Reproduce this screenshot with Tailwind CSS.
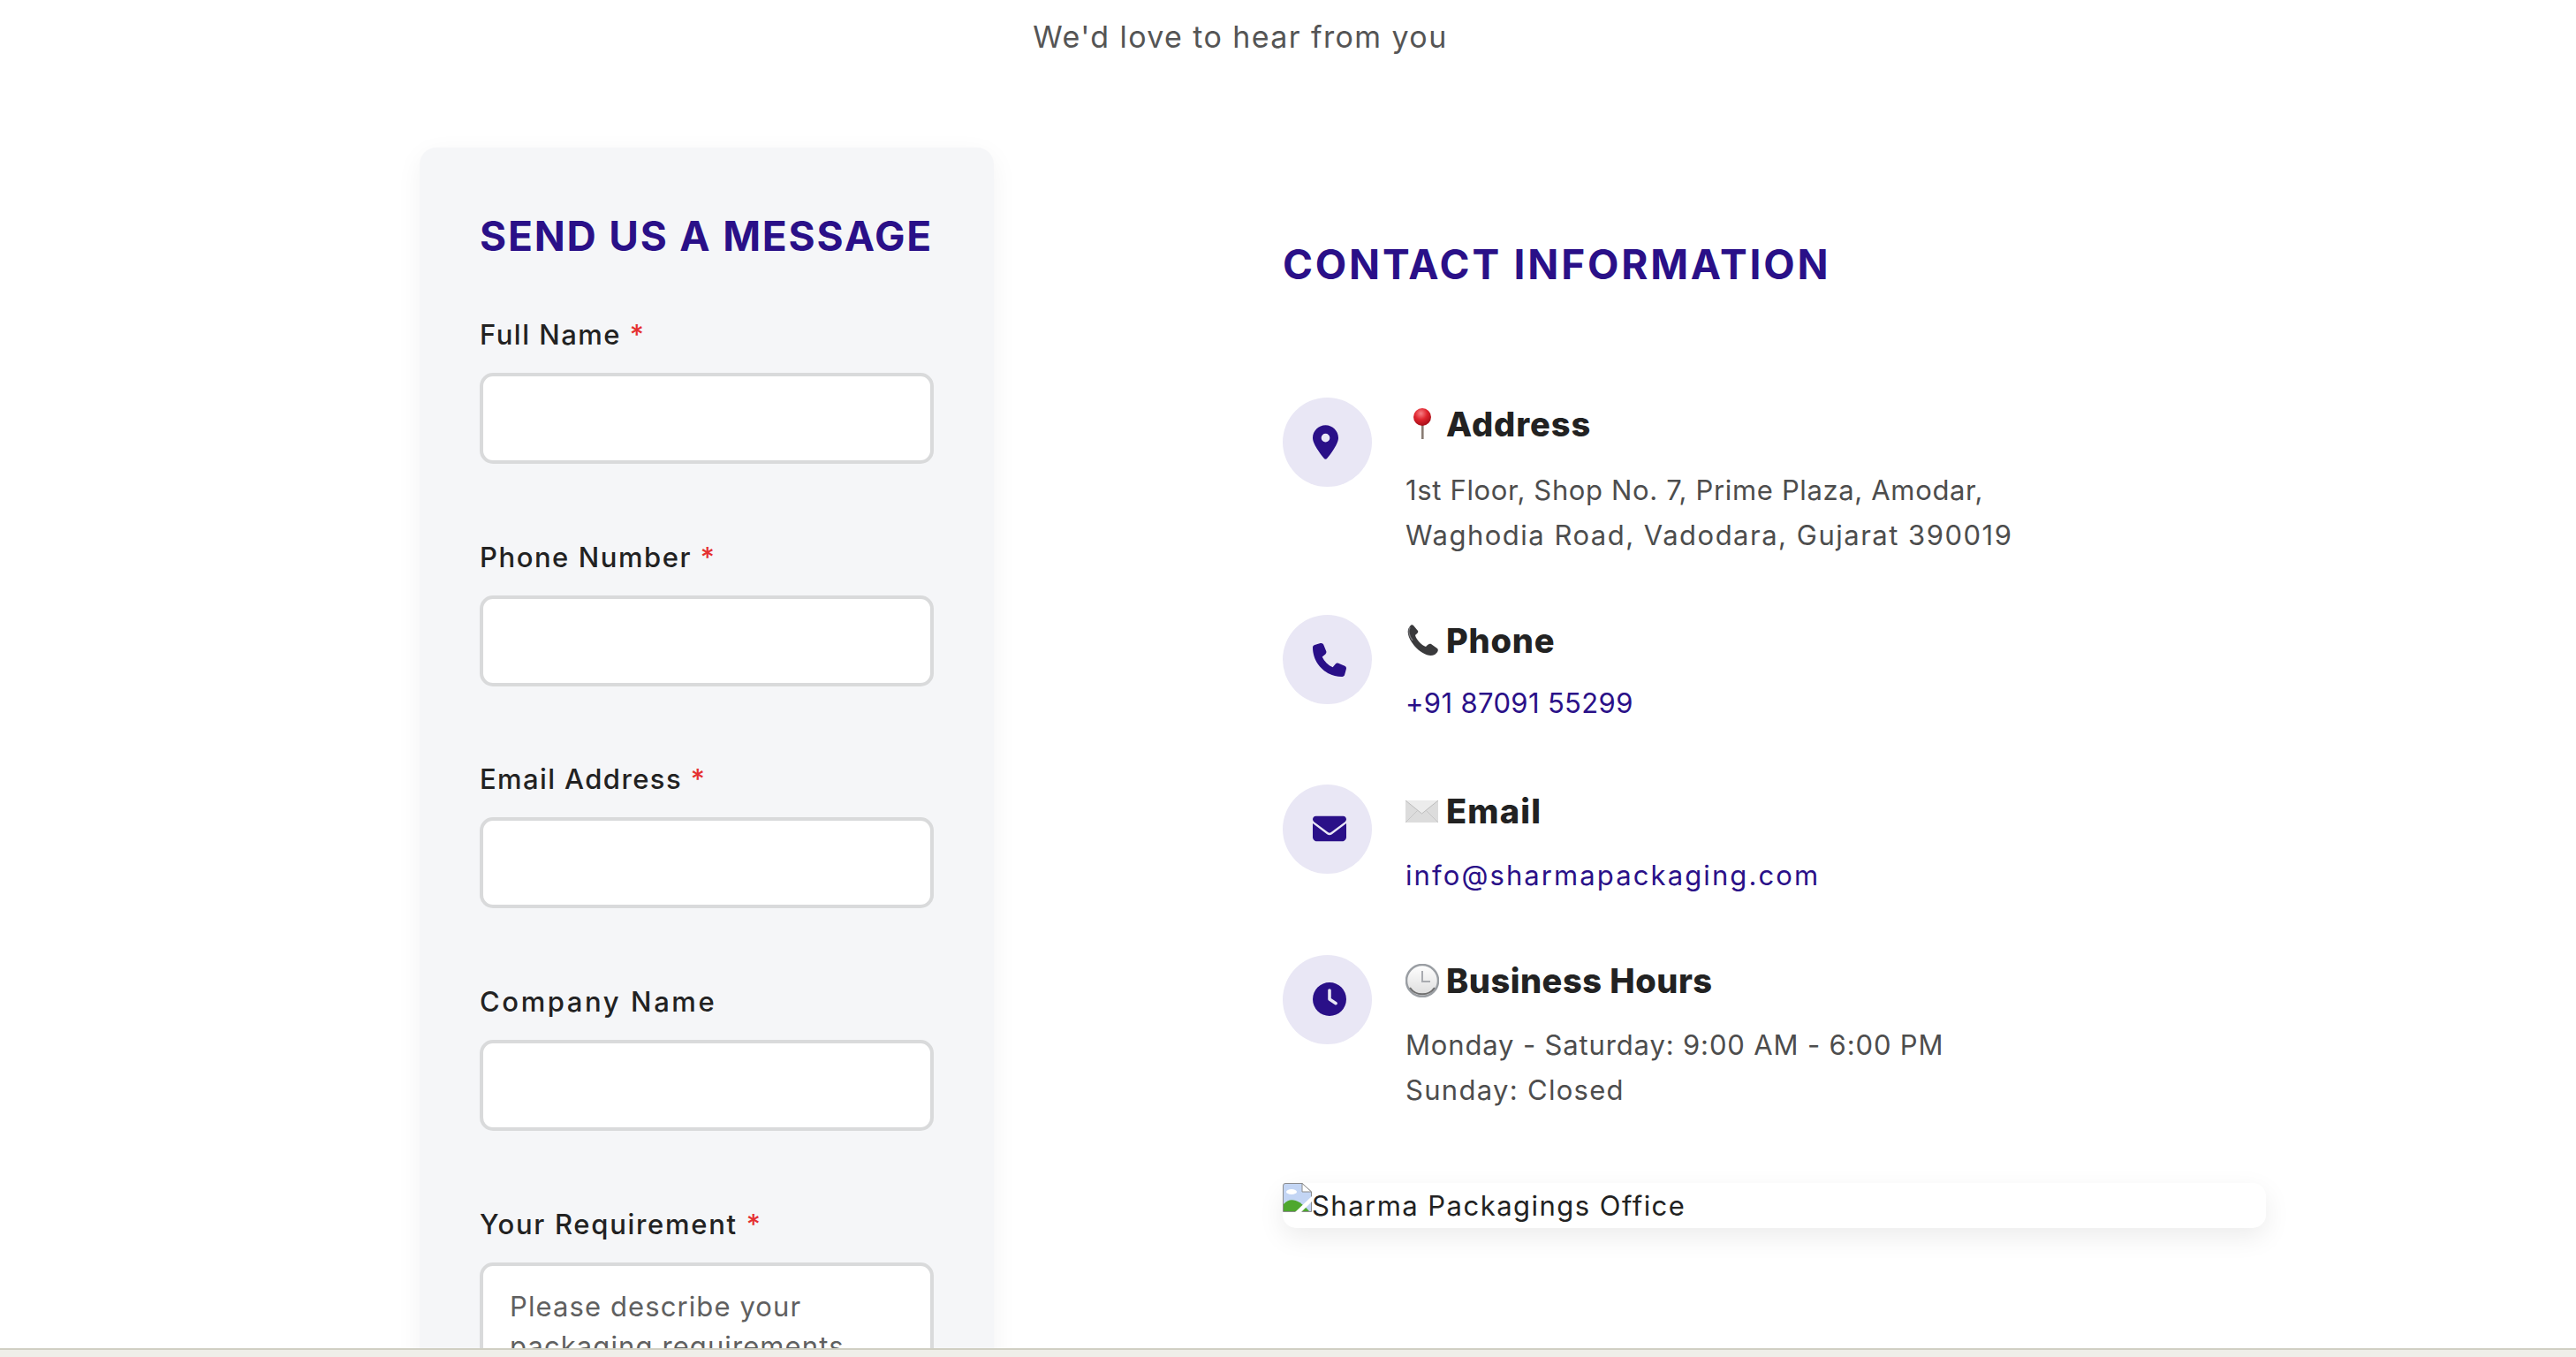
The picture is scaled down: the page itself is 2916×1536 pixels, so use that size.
<!DOCTYPE html>
<html lang="en">
<head>
    <meta charset="UTF-8">
    <meta name="viewport" content="width=device-width, initial-scale=1.0">
    <title>Contact Us</title>
    <script src="https://cdn.jsdelivr.net/npm/@tailwindcss/browser@4"></script>
</head>
<body class="bg-white h-[1536px] overflow-hidden flex flex-col font-['Inter',sans-serif] text-[31px] leading-[51px] text-[#4d4d4d]">
    <main class="h-[1526px] overflow-hidden">
        <p class="text-center h-[167px] pt-[16px] text-[34px] leading-[51px] tracking-[1.4px] text-[#555555] pr-[108px]">We'd love to hear from you</p>

        <div class="flex pl-[475px]">
            <!-- Form card -->
            <section class="w-[650px] shrink-0 h-[1500px] bg-[#f5f6f8] rounded-[19px] shadow-[0_8px_30px_rgba(0,0,0,0.05)] px-[68px] pt-[70px]">
                <h2 class="text-[46px] leading-[60px] font-bold text-[#2a1088] uppercase tracking-[1.8px] mb-[57px] whitespace-nowrap">Send us a message</h2>

                <label class="block leading-[49px] font-medium text-[#222222] mb-[19px] tracking-[1.5px]">Full Name <span class="text-[#e53030]">*</span></label>
                <input type="text" class="block w-full h-[103px] bg-white border-[4px] border-[#d9dadb] rounded-[15px] mb-[80.7px]">

                <label class="block leading-[49px] font-medium text-[#222222] mb-[19px] tracking-[1.55px]">Phone Number <span class="text-[#e53030]">*</span></label>
                <input type="text" class="block w-full h-[103px] bg-white border-[4px] border-[#d9dadb] rounded-[15px] mb-[80.7px]">

                <label class="block leading-[49px] font-medium text-[#222222] mb-[19px] tracking-[1.4px]">Email Address <span class="text-[#e53030]">*</span></label>
                <input type="text" class="block w-full h-[103px] bg-white border-[4px] border-[#d9dadb] rounded-[15px] mb-[80.7px]">

                <label class="block leading-[49px] font-medium text-[#222222] mb-[19px] tracking-[2.6px]">Company Name</label>
                <input type="text" class="block w-full h-[103px] bg-white border-[4px] border-[#d9dadb] rounded-[15px] mb-[80.7px]">

                <label class="block leading-[49px] font-medium text-[#222222] mb-[19px] tracking-[1.7px]">Your Requirement <span class="text-[#e53030]">*</span></label>
                <textarea rows="4" placeholder="Please describe your packaging requirements..." class="block w-full h-[240px] bg-white border-[4px] border-[#d9dadb] rounded-[15px] px-[30px] py-[23px] text-[31px] leading-[45px] tracking-[1.1px] placeholder:text-[#606060] resize-none"></textarea>
            </section>

            <!-- Contact info -->
            <section class="w-[1113px] ml-[327px] pt-[102px]">
                <h2 class="text-[46px] leading-[60px] font-bold text-[#2a1088] uppercase tracking-[2.8px] mb-[121px]">Contact Information</h2>

                <div class="flex gap-[38px] mb-[65px]">
                    <div class="w-[101px] h-[101px] shrink-0 rounded-full bg-[#e9e7f5] flex items-center pl-[34px]">
                        <svg class="h-[39px] w-[29px]" viewBox="0 0 384 512" fill="#2a1088"><path d="M215.7 499.2C267 435 384 279.4 384 192C384 86 298 0 192 0S0 86 0 192c0 87.4 117 243 168.3 307.2c12.3 15.3 35.1 15.3 47.4 0zM192 128a64 64 0 1 1 0 128 64 64 0 1 1 0-128z"/></svg>
                    </div>
                    <div>
                        <h3 class="flex items-center h-[60px] mb-[19px] text-[38px] font-extrabold text-[#222222] tracking-[0.9px]">
                            <span class="w-[46px] shrink-0 flex">
                                <svg class="w-[38px] h-[36px]" viewBox="0 0 38 36"><defs><radialGradient id="pinball" cx="0.42" cy="0.3" r="0.7"><stop offset="0" stop-color="#f77f85"/><stop offset="0.5" stop-color="#e0252e"/><stop offset="1" stop-color="#a50e18"/></radialGradient></defs><rect x="18" y="16" width="2.6" height="19" fill="#8a7d74"/><circle cx="19" cy="10" r="10" fill="url(#pinball)"/></svg>
                            </span>
                            Address
                        </h3>
                        <p><span class="tracking-[0.65px]">1st Floor, Shop No. 7, Prime Plaza, Amodar,</span><br><span class="tracking-[1.5px]">Waghodia Road, Vadodara, Gujarat 390019</span></p>
                    </div>
                </div>

                <div class="flex gap-[38px] mb-[67px]">
                    <div class="w-[101px] h-[101px] shrink-0 rounded-full bg-[#e9e7f5] flex items-center pl-[34px]">
                        <svg class="w-[38px] h-[38px]" viewBox="0 0 512 512" fill="#2a1088"><path d="M164.9 24.6c-7.7-18.6-28-28.5-47.4-23.2l-88 24C12.1 30.2 0 46 0 64C0 311.4 200.6 512 448 512c18 0 33.8-12.1 38.6-29.5l24-88c5.3-19.4-4.6-39.7-23.2-47.4l-96-40c-16.3-6.8-35.2-2.1-46.3 11.6L304.7 368C234.3 334.7 177.3 277.7 144 207.3L193.3 167c13.7-11.2 18.4-30 11.6-46.3l-40-96z"/></svg>
                    </div>
                    <div>
                        <h3 class="flex items-center h-[58px] mb-[16px] text-[38px] font-extrabold text-[#222222] tracking-[0.8px]">
                            <span class="w-[46px] shrink-0 flex">
                                <svg class="w-[38px] h-[38px]" viewBox="0 0 38 38"><path d="M5 3 C1 7 2 15 10 25 C18 34 27 38 33 35 C36 33 38 30 36 28 L29 23 C27 22 25 24 23 26 C19 25 12 18 11 13 C13 11 15 10 14 8 L9 2 C8 1 6 1 5 3 Z" fill="#3a3a3c"/><path d="M5 4 C3 8 4 14 8 19" fill="none" stroke="#77777a" stroke-width="1.5"/></svg>
                            </span>
                            Phone
                        </h3>
                        <a href="#" class="block text-[#2a1088] tracking-[0.35px]">+91 87091 55299</a>
                    </div>
                </div>

                <div class="flex gap-[38px] mb-[64px]">
                    <div class="w-[101px] h-[101px] shrink-0 rounded-full bg-[#e9e7f5] flex items-center pl-[34px] pb-[2px]">
                        <svg class="w-[38px] h-[38px]" viewBox="0 0 512 512" fill="#2a1088"><path d="M48 64C21.5 64 0 85.5 0 112c0 15.1 7.1 29.3 19.2 38.4L236.8 313.6c11.4 8.5 27 8.5 38.4 0L492.8 150.4c12.1-9.1 19.2-23.3 19.2-38.4c0-26.5-21.5-48-48-48H48zM0 176V384c0 35.3 28.7 64 64 64H448c35.3 0 64-28.7 64-64V176L294.4 339.2c-22.8 17.1-54 17.1-76.8 0L0 176z"/></svg>
                    </div>
                    <div>
                        <h3 class="flex items-center h-[60px] mb-[17px] text-[38px] font-extrabold text-[#222222] tracking-[1.2px]">
                            <span class="w-[46px] shrink-0 flex">
                                <svg class="w-[37px] h-[25px]" viewBox="0 0 37 25"><rect width="37" height="25" fill="#dcdcdc"/><path d="M0 0 L18.5 15 L37 0" fill="#ececec" stroke="#bcbcbc" stroke-width="1"/><path d="M0 25 L14 11 M37 25 L23 11" stroke="#c6c6c6" stroke-width="1" fill="none"/></svg>
                            </span>
                            Email
                        </h3>
                        <a href="#" class="block text-[#2a1088] tracking-[2.1px] mb-[1px]">info@sharmapackaging.com</a>
                    </div>
                </div>

                <div class="flex gap-[38px] mb-[80px]">
                    <div class="w-[101px] h-[101px] shrink-0 rounded-full bg-[#e9e7f5] flex items-center pl-[34px] pb-[2px]">
                        <svg class="w-[38px] h-[38px]" viewBox="0 0 512 512" fill="#2a1088"><path d="M256 0a256 256 0 1 1 0 512A256 256 0 1 1 256 0zM232 120V256c0 8 4 15.5 10.7 20l96 64c11 7.4 25.9 4.4 33.3-6.7s4.4-25.9-6.7-33.3L280 243.2V120c0-13.3-10.7-24-24-24s-24 10.7-24 24z"/></svg>
                    </div>
                    <div>
                        <h3 class="flex items-center h-[58px] mb-[18px] text-[38px] font-extrabold text-[#222222] tracking-[0.5px]">
                            <span class="w-[46px] shrink-0 flex">
                                <svg class="w-[38px] h-[38px]" viewBox="0 0 38 38"><defs><linearGradient id="clockface" x1="0" y1="0" x2="0" y2="1"><stop offset="0" stop-color="#ffffff"/><stop offset="1" stop-color="#dcdcdc"/></linearGradient></defs><circle cx="19" cy="19" r="18" fill="url(#clockface)" stroke="#9a9ea3" stroke-width="2.5"/><path d="M19 8 V20 H28" fill="none" stroke="#a9abb0" stroke-width="2"/><path d="M5 27 A17 17 0 0 0 33 27" fill="none" stroke="#6f6f6f" stroke-width="2"/></svg>
                            </span>
                            Business Hours
                        </h3>
                        <p><span class="tracking-[0.85px]">Monday - Saturday: 9:00 AM - 6:00 PM</span><br><span class="tracking-[1.3px]">Sunday: Closed</span></p>
                    </div>
                </div>

                <!-- broken image with alt text -->
                <div class="flex h-[51px] rounded-[15px] bg-white shadow-[0_10px_30px_rgba(0,0,0,0.08)] text-[#222222]">
                    <svg class="w-[33px] h-[33px] shrink-0" viewBox="0 0 33 33"><path d="M0.5 32.5 V3 Q0.5 0.5 3 0.5 H22 L32.5 10 V32.5 Z" fill="#c3d5f4" stroke="#8c8c8c"/><path d="M22 0.5 V10 H32.5 Z" fill="#ffffff" stroke="#8c8c8c"/><path d="M1 32 V24 C8 16 18 18 30 32 Z" fill="#4ea72e"/><ellipse cx="10" cy="10" rx="6" ry="3" fill="#ffffff"/><path d="M14 33 L33 15 V21 L21 33 Z" fill="#ffffff"/></svg>
                    <span class="tracking-[1.47px]">Sharma Packagings Office</span>
                </div>
            </section>
        </div>
    </main>
    <div class="h-[10px] shrink-0 bg-[#efeee9] border-t-2 border-[#d0cfc3]"></div>
</body>
</html>
